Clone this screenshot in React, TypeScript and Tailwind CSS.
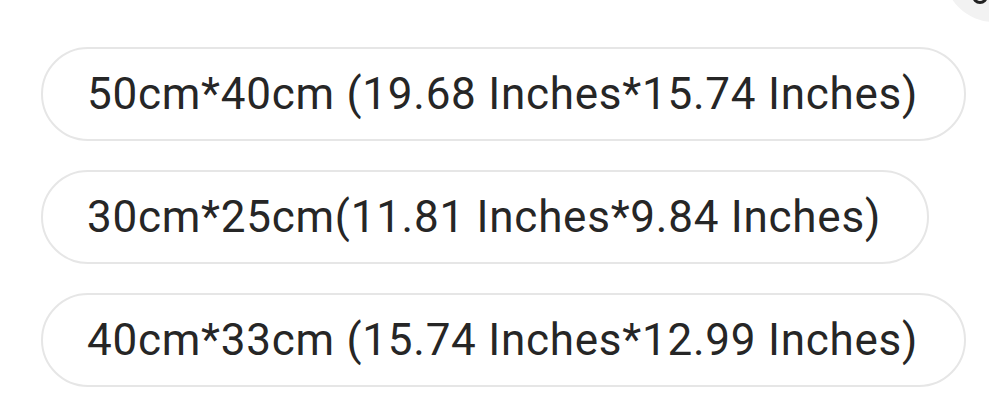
import React from "react";

const items = [
  "50cm*40cm (19.68 Inches*15.74 Inches)",
  "30cm*25cm(11.81 Inches*9.84 Inches)",
  "40cm*33cm (15.74 Inches*12.99 Inches)",
];

export default function App() {
  return (
    <div className="relative w-[989px] h-[410px] bg-white overflow-hidden" style={{ fontFamily: "Roboto, 'Liberation Sans', sans-serif" }}>
      <div className="absolute left-[944px] top-[-78px] w-[100px] h-[100px] rounded-full bg-[#f2f2f2]">
        <div className="absolute left-[28px] top-[64px] w-[16px] h-[18px] rounded-full border-[3px] border-[#222]" />
      </div>
      <div className="flex flex-col items-start gap-[29px] pl-[41px] pt-[47px]">
        {items.map((t) => (
          <div
            key={t}
            className="h-[94px] flex items-center pl-[44px] pr-[46px] rounded-full border-2 border-[#e6e6e6] text-[44px] tracking-[0.75px] text-[#262626] whitespace-nowrap"
          >
            {t}
          </div>
        ))}
      </div>
    </div>
  );
}
